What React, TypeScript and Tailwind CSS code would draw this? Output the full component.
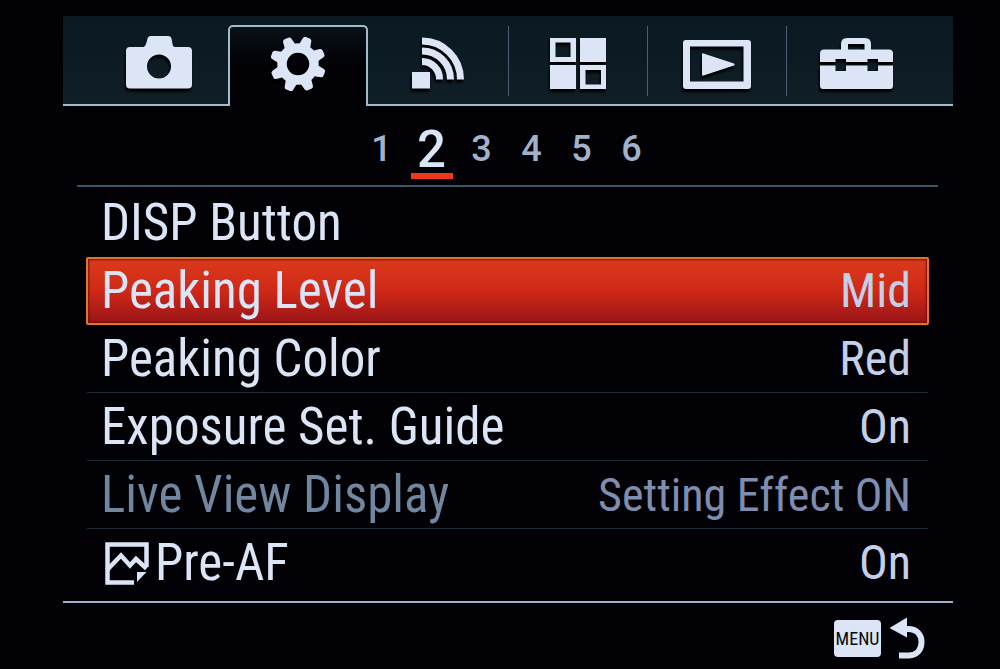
import type { ReactNode } from "react";

function Camera() {
  return (
    <svg width="66" height="54" viewBox="0 0 66 54" fill="currentColor" aria-hidden="true">
      <path
        fillRule="evenodd"
        d="M4 11H17.500Q19 11 20 8L21.500 2.500Q22 0 25 0H42Q45 0 45.500 2.500L46.500 8Q47 11 49 11H62Q66 11 66 15V48.500Q66 52.500 62 52.500H4Q0 52.500 0 48.500V15Q0 11 4 11ZM33 18.500A12 12 0 1 0 33 42.500A12 12 0 1 0 33 18.500Z"
      />
    </svg>
  );
}

const TEETH = [0, 45, 90, 135, 180, 225, 270, 315];

function Gear() {
  return (
    <svg width="56" height="54" viewBox="-28 -27 56 54" fill="currentColor" aria-hidden="true">
      <circle r="16" fill="none" stroke="currentColor" strokeWidth="9.500" />
      {TEETH.map((angle) => (
        <path
          key={angle}
          transform={`rotate(${angle + 20.5})`}
          d="M-6 -18L-4.500 -26Q-4 -28 -2 -28H2Q4 -28 4.500 -26L6 -18Z"
        />
      ))}
    </svg>
  );
}

function Wireless() {
  return (
    <svg width="54" height="54" viewBox="0 0 54 54" aria-hidden="true">
      <rect x="1" y="36" width="18" height="16.500" fill="currentColor" />
      <g fill="none" stroke="currentColor" strokeWidth="7">
        <path d="M11 5A38.500 38.500 0 0 1 49.500 43.500" />
        <path d="M11 15A28.500 28.500 0 0 1 39.500 43.500" />
        <path d="M11 25.500A17.500 17.500 0 0 1 28.500 43.500" />
      </g>
    </svg>
  );
}

function Apps() {
  return (
    <svg width="56" height="54" viewBox="0 0 56 54" fill="currentColor" aria-hidden="true">
      <path fillRule="evenodd" d="M0 2H26V26H0ZM5.500 6.500V21H20.500V6.500Z" />
      <path d="M30 2H56V26H30Z" />
      <path d="M0 29H26V53H0Z" />
      <path fillRule="evenodd" d="M30 29H56V53H30ZM35.500 34V48.500H51V34Z" />
    </svg>
  );
}

function Playback() {
  return (
    <svg width="68" height="54" viewBox="0 0 68 54" fill="currentColor" aria-hidden="true">
      <path
        fillRule="evenodd"
        d="M3 4H65Q68 4 68 7V50Q68 53 65 53H3Q0 53 0 50V7Q0 4 3 4ZM7 10.500V45.500H60.500V10.500Z"
      />
      <path d="M19 18Q19 17 20.500 17.500L51 27.500Q52.500 28.500 51 29.500L20.500 39.500Q19 40 19 39Z" />
    </svg>
  );
}

function Toolbox() {
  return (
    <svg width="74" height="54" viewBox="0 0 74 54" fill="currentColor" aria-hidden="true">
      <path
        fillRule="evenodd"
        d="M5 13.500H22V8Q22 2 28 2H46Q52 2 52 8V13.500H70Q74 13.500 74 17.500V26H59V23H48.500V26H27V23H16.500V26H1V17.500Q1 13.500 5 13.500ZM29 8V13.500H45.500V8Z"
      />
      <path d="M1 29.500H16.500V35H27V29.500H48.500V35H59V29.500H74V49.500Q74 53 71 53H4Q1 53 1 49.500Z" />
    </svg>
  );
}

function Photo() {
  return (
    <svg width="44" height="43" viewBox="0 0 44 43" fill="none" stroke="currentColor" strokeWidth="4.500" aria-hidden="true">
      <path d="M29 40.500H2.500V2.500H41.500V25" />
      <path d="M2 28L16 13.500L25 23.500L31 17L41.500 26.500" />
      <path d="M32 30H41.500L32 40Z" fill="currentColor" stroke="none" />
    </svg>
  );
}

function Back() {
  return (
    <svg width="36" height="42" viewBox="0 0 36 42" aria-hidden="true">
      <path d="M17 12C28 11 32.500 18 32.500 25C32.500 33 28 38 20 38.500H10" fill="none" stroke="currentColor" strokeWidth="6" />
      <path d="M0.500 11L18 0.500V20.500Z" fill="currentColor" />
    </svg>
  );
}

type Tab = { name: string; icon: ReactNode; look: string };

const idle = "border-b-2 border-[#a3bccb] pt-5";

const tabs: Tab[] = [
  { name: "Camera Settings", icon: <Camera />, look: `${idle} pl-[26px]` },
  {
    name: "Custom Settings",
    icon: <Gear />,
    look: "mt-[9px] rounded-t-[5px] border-2 border-b-0 border-[#a3bccb] bg-linear-to-b from-[#0a1218] to-[#020206] to-50% pt-[10px]",
  },
  { name: "Wireless", icon: <Wireless />, look: idle },
  { name: "Application", icon: <Apps />, look: idle },
  { name: "Playback", icon: <Playback />, look: idle },
  { name: "Setup", icon: <Toolbox />, look: `${idle} pr-7` },
];

const dividers = [false, false, false, true, true, true];

type Setting = { label: string; value?: string; icon?: ReactNode; row: string; valueLook?: string };

const plain = "border-x-2 border-x-transparent";
const line = `${plain} border-b border-b-[#1c2c35]`;

const settings: Setting[] = [
  { label: "DISP Button", row: plain },
  {
    label: "Peaking Level",
    value: "Mid",
    row: "rounded-[2px] border-2 border-[#e0762c] bg-linear-to-b from-[#da3a1c] via-[#cf2817] to-[#9a1517] inset-shadow-[0_0_2px_1px_#7a0c0c]",
  },
  { label: "Peaking Color", value: "Red", row: line },
  { label: "Exposure Set. Guide", value: "On", row: line },
  {
    label: "Live View Display",
    value: "Setting Effect ON",
    row: `${line} text-[#71869f]`,
    valueLook: "text-[46px] text-[#7f8db0]",
  },
  { label: "Pre-AF", value: "On", icon: <Photo />, row: plain },
];

const pages = [1, 2, 3, 4, 5, 6];

export default function App() {
  return (
    <main className="min-h-screen bg-[#020206] pt-4 pr-[47px] pl-[63px] font-['Roboto_Condensed',Roboto,sans-serif] text-[#dbe5f6]">
      <nav
        aria-label="Menu tabs"
        className="grid h-[90px] grid-cols-[165fr_140fr_140fr_139fr_139fr_167fr] bg-linear-to-b from-[#0a1922] to-[#101e26]"
      >
        {tabs.map((tab, i) => (
          <button
            key={tab.name}
            type="button"
            aria-label={tab.name}
            aria-current={i === 1 ? "page" : undefined}
            className={`relative flex items-start justify-center ${tab.look}`}
          >
            {dividers[i] && <span className="absolute top-[10px] left-0 h-[70px] w-px bg-[#4a6072]" />}
            <span className="drop-shadow-[-1px_3px_1px_#000000]">{tab.icon}</span>
          </button>
        ))}
      </nav>

      <nav
        aria-label="Pages"
        className="mr-[15px] ml-[14px] flex h-[81px] justify-center border-b-2 border-[#3c5566] pt-5 pr-[2px] font-[Roboto,sans-serif] font-medium"
      >
        {pages.map((page) =>
          page === 2 ? (
            <button
              key={page}
              type="button"
              aria-current="page"
              className="mx-1 h-[53px] w-[42px] border-b-[6px] border-[#f0371c] text-[51px] leading-[46px]"
            >
              {page}
            </button>
          ) : (
            <button key={page} type="button" className="h-[46px] w-[50px] text-4xl leading-[46px] text-[#a3b2cb]">
              {page}
            </button>
          ),
        )}
      </nav>

      <ul className="mr-6 ml-[23px] pt-[2px]">
        {settings.map((setting) => (
          <li key={setting.label}>
            <button
              type="button"
              className={`flex h-[68px] w-full items-center justify-between pr-4 pl-[13px] text-left whitespace-nowrap ${setting.row}`}
            >
              <span className="flex items-center gap-[6px] text-[51px] leading-[62px]">
                {setting.icon && <span className="pl-1">{setting.icon}</span>}
                {setting.label}
              </span>
              <span className={`leading-[62px] ${setting.valueLook ?? "text-[48px] text-[#c4cfe8]"}`}>{setting.value}</span>
            </button>
          </li>
        ))}
      </ul>

      <footer className="mt-1 flex justify-end border-t-2 border-[#9fb0c8] pt-[14px] pr-7">
        <button type="button" aria-label="Menu, go back" className="flex gap-2">
          <span className="mt-[3px] flex h-[37px] w-[47px] items-center justify-center rounded-[4px] bg-[#dbe5f6] text-lg leading-none text-[#08080c]">
            MENU
          </span>
          <Back />
        </button>
      </footer>
    </main>
  );
}
